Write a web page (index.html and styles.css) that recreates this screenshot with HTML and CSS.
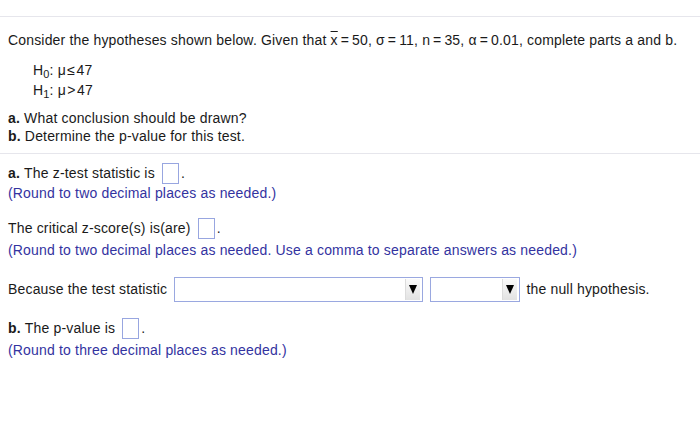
FILE: index.html
```html
<!DOCTYPE html>
<html>
<head>
<meta charset="utf-8">
<link rel="stylesheet" href="styles.css">
</head>
<body>
<div class="topbar"></div>
<div class="question">
  <p class="intro">Consider the hypotheses shown below. Given that <span class="xbar">x</span>&#8201;=&#8201;50, σ&#8201;=&#8201;11, n&#8201;=&#8201;35, α&#8201;=&#8201;0.01, complete parts a and b.</p>
  <div class="hyp">
    <div class="hline">H<sub>0</sub>: μ&#8202;≤&#8202;47</div>
    <div class="hline">H<sub>1</sub>: μ&#8202;&gt;&#8202;47</div>
  </div>
  <div class="parts">
    <div><b>a.</b> What conclusion should be drawn?</div>
    <div><b>b.</b> Determine the p-value for this test.</div>
  </div>
</div>
<div class="answers">
  <div class="block">
    <div class="row"><b>a.</b>&nbsp;The z-test statistic is <span class="box"></span>.</div>
    <div class="hint">(Round to two decimal places as needed.)</div>
  </div>
  <div class="block b2">
    <div class="row">The critical z-score(s) is(are) <span class="box"></span>.</div>
    <div class="hint h2">(Round to two decimal places as needed. Use a comma to separate answers as needed.)</div>
  </div>
  <div class="block sel-block">
    <div class="row">Because the test statistic <span class="select wide"><span class="arrow"></span></span><span class="select narrow"><span class="arrow"></span></span> the null hypothesis.</div>
  </div>
  <div class="block">
    <div class="row"><b>b.</b>&nbsp;The p-value is <span class="box"></span>.</div>
    <div class="hint h2">(Round to three decimal places as needed.)</div>
  </div>
</div>
</body>
</html>
```
FILE: styles.css
```css
body {
  margin: 0;
  background: #ffffff;
  font-family: "Liberation Sans", Arial, sans-serif;
  font-size: 14px;
  letter-spacing: 0.17px;
  color: #1a1a1a;
}
.topbar {
  height: 16px;
  border-bottom: 1px solid #e6e6ec;
}
.question {
  padding: 15px 8px 8px 8px;
  border-bottom: 1px solid #e6e6ec;
}
.intro {
  margin: 0;
  line-height: 16px;
}
.xbar {
  text-decoration: overline;
}
.hyp {
  padding-left: 25px;
  margin-top: 12px;
}
.hline {
  line-height: 20px;
}
.hline sub {
  font-size: 11px;
  vertical-align: -3px;
  line-height: 0;
}
.parts {
  margin-top: 9px;
  line-height: 18px;
}
.answers {
  padding: 8px 8px 0 8px;
}
.block {
  margin-bottom: 16px;
}
.b2 {
  margin-bottom: 18px;
}
.row {
  display: flex;
  align-items: center;
  height: 22px;
  white-space: pre;
}
.hint {
  color: #33339f;
  line-height: 16px;
  margin-top: 1px;
}
.hint.h2 {
  margin-top: 3px;
}
.box {
  display: inline-block;
  width: 15px;
  height: 19px;
  border: 1px solid #98a6e0;
  margin-left: 3px;
  margin-right: 2px;
}
.sel-block {
  margin-bottom: 15px;
}
.sel-block .row {
  height: 26px;
}
.select {
  display: inline-flex;
  justify-content: flex-end;
  align-items: center;
  height: 25px;
  border: 1px solid #9aa8e0;
  box-sizing: border-box;
  margin-left: 3px;
  padding-right: 2px;
}
.select.wide {
  width: 249px;
  margin-right: 4px;
}
.select.narrow {
  width: 90px;
  margin-right: 2px;
}
.arrow {
  width: 14px;
  height: 21px;
  background: linear-gradient(#fafafa, #e2e2e2);
  border-left: 1px solid #dcdcdc;
  display: flex;
  align-items: center;
  justify-content: center;
}
.arrow::after {
  content: "";
  border-left: 4px solid transparent;
  border-right: 4px solid transparent;
  border-top: 9px solid #000;
}
```
